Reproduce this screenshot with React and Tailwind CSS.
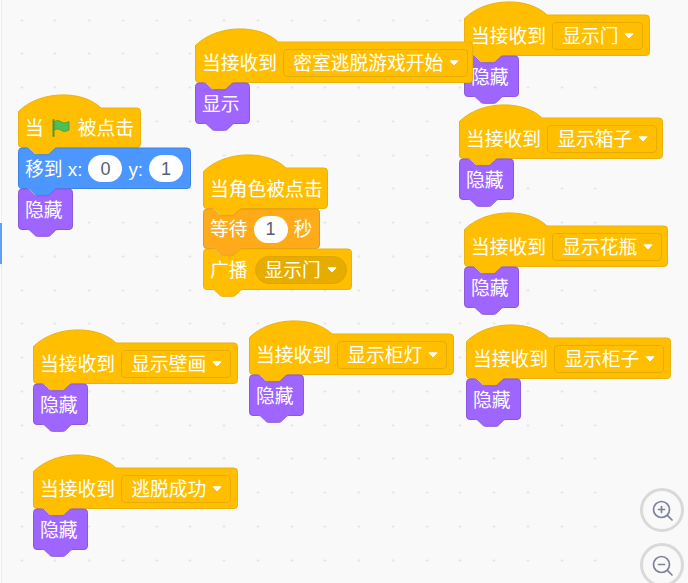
const FONT = "font-['Liberation_Sans','Noto_Sans_CJK_SC',sans-serif]";

const COLORS = {
  hat: ['#FFBF00', '#E9B10C'],
  blue: ['#4C97FF', '#4084E0'],
  purple: ['#9F66FF', '#8A58DC'],
  orange: ['#FFAB19', '#E39A1A'],
};

function shape(w, h, hat, top, bottom) {
  const r = 3.5;
  const notch = (dir) =>
    dir > 0
      ? 'c1.7,0 2.5,.8 3.4,1.7 l3.4,3.4 c.9,.9 1.7,1.7 3.4,1.7 h10.2 c1.7,0 2.5,-.8 3.4,-1.7 l3.4,-3.4 c.9,-.9 1.7,-1.7 3.4,-1.7'
      : 'c-1.7,0 -2.5,.8 -3.4,1.7 l-3.4,3.4 c-.9,.9 -1.7,1.7 -3.4,1.7 h-10.2 c-1.7,0 -2.5,-.8 -3.4,-1.7 l-3.4,-3.4 c-.9,-.9 -1.7,-1.7 -3.4,-1.7';
  let d = '';
  if (hat) {
    d += `M.5,${hat + r} C22,${hat - 18} 65,${hat - 18} 83,${hat}`;
    d += `H${w - r - 0.5} a${r},${r} 0 0 1 ${r},${r}`;
  } else {
    d += `M.5,${r} a${r},${r} 0 0 1 ${r},-${r} H8.5`;
    if (top) d += notch(1);
    d += `H${w - r - 0.5} a${r},${r} 0 0 1 ${r},${r}`;
  }
  const H = h + hat;
  d += `V${H - r - 0.5} a${r},${r} 0 0 1 -${r},${r}`;
  d += `H40`;
  if (bottom) d += notch(-1);
  d += `H${r + 0.5} a${r},${r} 0 0 1 -${r},-${r} Z`;
  return d;
}

function T({ children }) {
  return <span className="pt-[3px]">{children}</span>;
}

function Block({ kind, w, h, hat = 0, top = true, bottom = true, cls, children }) {
  const [fill, stroke] = COLORS[kind];
  return (
    <div className={`relative ${cls}`}>
      <svg className="absolute left-0 top-0 overflow-visible" width={w} height={h + hat}>
        <path d={shape(w, h, hat, top, bottom)} fill={fill} stroke={stroke} strokeWidth="1" />
      </svg>
      <div className="relative flex h-full items-center whitespace-nowrap pl-[7px] text-[18.8px] leading-none text-white">
        {children}
      </div>
    </div>
  );
}

function Caret() {
  return (
    <svg width="10" height="6" viewBox="0 0 10 6" className="ml-[6px] shrink-0">
      <path d="M1,.8 h8 L5,5 Z" fill="#fff" stroke="#fff" strokeWidth="1" strokeLinejoin="round" />
    </svg>
  );
}

function Dropdown({ cls, children }) {
  return (
    <div className={`ml-[6px] flex h-[28px] items-center rounded-[4px] border border-[#E6AC00] pl-[9px] ${cls}`}>
      <T>{children}</T>
      <Caret />
    </div>
  );
}

function Num({ children }) {
  return (
    <div className="mx-[6px] flex h-[27px] w-[34px] items-center justify-center rounded-full bg-white text-[18px] text-[#575E75]">
      {children}
    </div>
  );
}

function Flag() {
  return (
    <svg width="18" height="18" viewBox="0 0 18 18" className="mx-[8px]">
      <path d="M1.5,1 V17" stroke="#45993D" strokeWidth="2" strokeLinecap="round" />
      <path d="M2.5,2.5 C5,1 7.5,1.5 9.5,3 C11.5,4.5 14,4 17,2.5 V11 C14,12.5 11.5,13 9.5,11.5 C7.5,10 5,9.5 2.5,11 Z" fill="#4CBF56" stroke="#45993D" strokeWidth=".8" />
    </svg>
  );
}

function Hide({ label = '隐藏' }) {
  return (
    <Block kind="purple" w={55} h={41} cls="w-[55px] h-[41px]">
      <T>{label}</T>
    </Block>
  );
}

function Receive({ pos, w, name, dd, label, hide }) {
  return (
    <div className={`absolute flex flex-col items-start ${pos}`}>
      <Block kind="hat" w={w} h={41} hat={14} top={false} cls={`pt-[14px] h-[55px] ${dd}`}>
        <T>当接收到</T>
        <Dropdown cls={name}>{label}</Dropdown>
      </Block>
      <Hide label={hide} />
    </div>
  );
}

function ZoomButton({ plus }) {
  return (
    <div className="flex h-[44px] w-[44px] items-center justify-center rounded-full border-[3px] border-[#D9D9D9] bg-[#F9F9F9]">
      <svg width="24" height="24" viewBox="0 0 24 24" fill="none" stroke="#7D829A" strokeWidth="1.7" strokeLinecap="round">
        <circle cx="11.5" cy="11.5" r="8" />
        <path d={plus ? 'M17.4,17.4 L22,22 M8.5,11.5 H14.5 M11.5,8.5 V14.5' : 'M17.4,17.4 L22,22 M8.5,11.5 H14.5'} />
      </svg>
    </div>
  );
}

const DOTS = Array.from({ length: 18 * 18 }, (_, i) => i);

export default function App() {
  return (
    <div className={`relative h-[583px] w-[688px] overflow-hidden bg-[#F9F9F9] ${FONT}`}>
      <svg className="absolute left-0 top-0" width="688" height="583">
        {DOTS.map((i) => {
          const x = Math.round(21.5 + (i % 18) * 33.75);
          const y = Math.round(19.5 + Math.floor(i / 18) * 33.75);
          return <path key={i} d={`M${x - 1.5},${y + 0.5} h3 M${x},${y - 1} v3`} stroke="#E6E6E6" strokeWidth="1" />;
        })}
      </svg>
      <div className="absolute left-0 top-0 h-full w-[2px] border-r border-[#EDEDED] bg-[#FCFCFC] pt-[223px]">
        <div className="h-[41px] w-[2px] bg-[#5C9FFA]" />
      </div>

      <Receive pos="left-[464px] top-[1px]" w={186} dd="w-[186px]" name="w-[91px]" label="显示门" />
      <Receive pos="left-[459px] top-[104px]" w={204} dd="w-[204px]" name="w-[110px]" label="显示箱子" />
      <Receive pos="left-[464px] top-[212px]" w={204} dd="w-[204px]" name="w-[110px]" label="显示花瓶" />

      <Receive pos="left-[195px] top-[28px]" w={278} dd="w-[278px]" name="w-[185px]" label="密室逃脱游戏开始" hide="显示" />

      <div className="absolute left-[18px] top-[94px] flex flex-col items-start">
        <Block kind="hat" w={123} h={40} hat={14} top={false} cls="h-[54px] w-[123px] pt-[14px]">
          <T>当</T>
          <Flag />
          <T>被点击</T>
        </Block>
        <Block kind="blue" w={173} h={41} cls="h-[41px] w-[173px]">
          <T>移到 x:</T>
          <Num>0</Num>
          <T>y:</T>
          <Num>1</Num>
        </Block>
        <Hide />
      </div>

      <div className="absolute left-[203px] top-[154px] flex flex-col items-start">
        <Block kind="hat" w={125} h={41} hat={14} top={false} cls="h-[55px] w-[125px] pt-[14px]">
          <T>当角色被点击</T>
        </Block>
        <Block kind="orange" w={117} h={40} cls="h-[40px] w-[117px]">
          <T>等待</T>
          <Num>1</Num>
          <T>秒</T>
        </Block>
        <Block kind="hat" w={149} h={41} cls="h-[41px] w-[149px]">
          <T>广播</T>
          <div className="ml-[7px] flex h-[28px] items-center rounded-full border border-[#DDA600] bg-[#E6AC00] pl-[9px] pr-[9px]">
            <T>显示门</T>
            <Caret />
          </div>
        </Block>
      </div>

      <Receive pos="left-[33px] top-[329px]" w={205} dd="w-[205px]" name="w-[110px]" label="显示壁画" />
      <Receive pos="left-[249px] top-[320px]" w={205} dd="w-[205px]" name="w-[110px]" label="显示柜灯" />
      <Receive pos="left-[466px] top-[324px]" w={205} dd="w-[205px]" name="w-[110px]" label="显示柜子" />
      <Receive pos="left-[33px] top-[454px]" w={205} dd="w-[205px]" name="w-[110px]" label="逃脱成功" />

      <div className="absolute left-[640px] top-[488px] flex flex-col gap-[11px]">
        <ZoomButton plus />
        <ZoomButton />
      </div>
    </div>
  );
}
